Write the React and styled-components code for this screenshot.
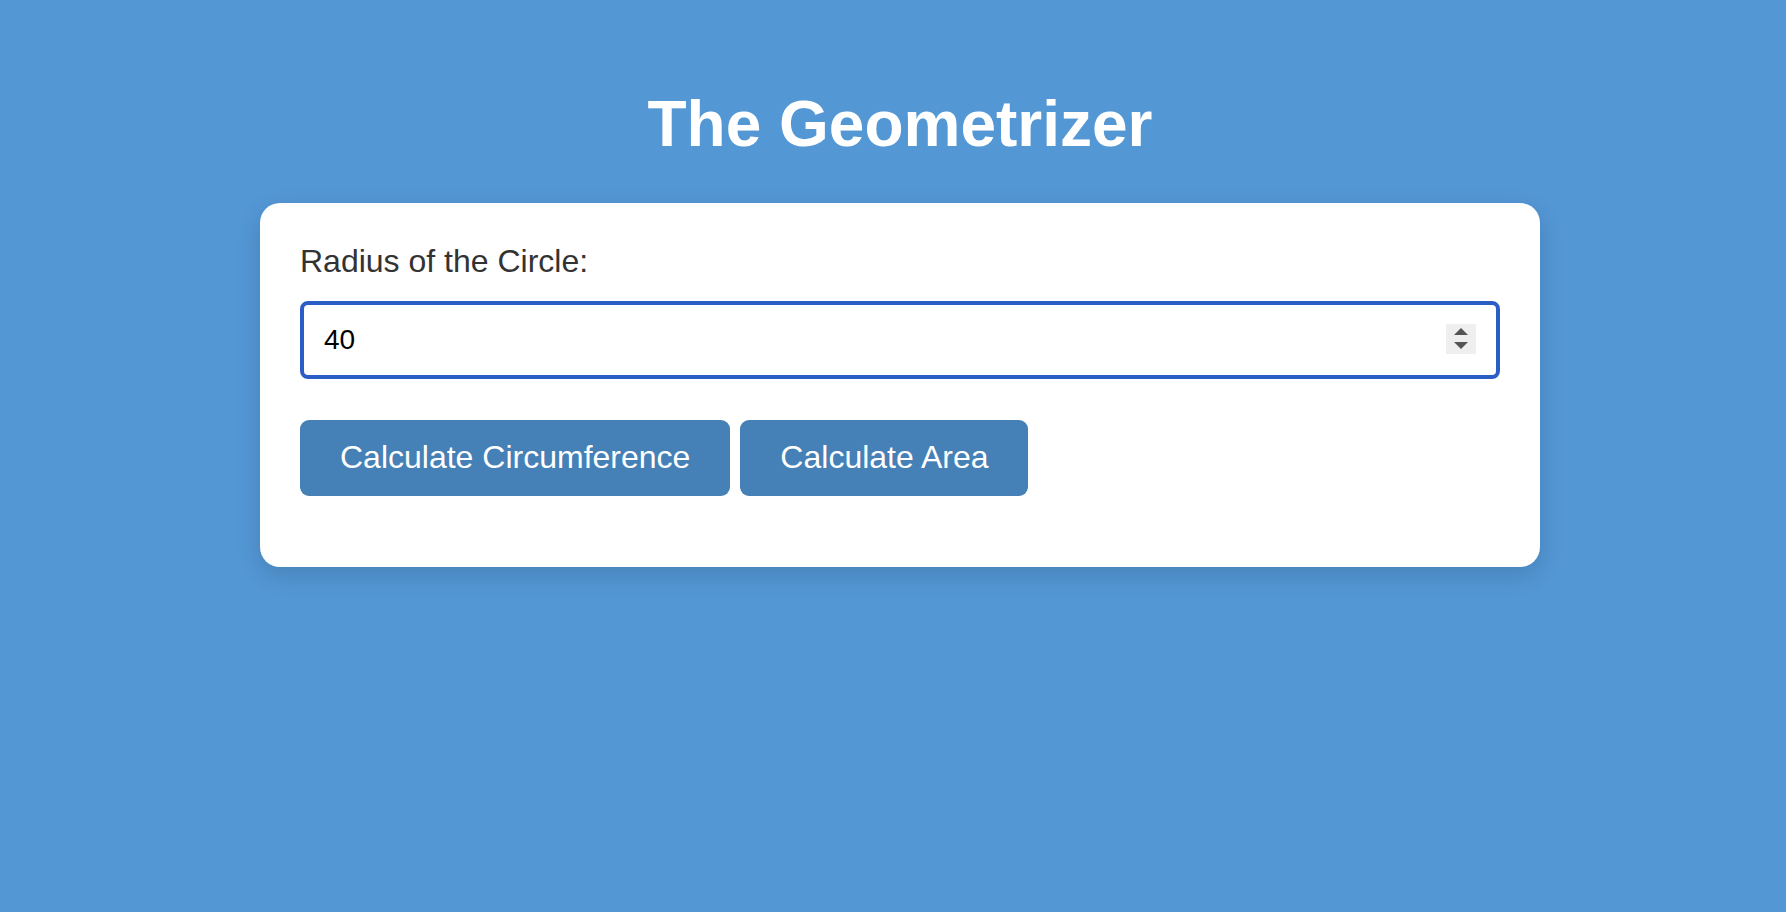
import React, { useState } from "react";
import styled, { createGlobalStyle } from "styled-components";

const GlobalStyle = createGlobalStyle`
  html, body {
    margin: 0;
    padding: 0;
    background: #5397d5;
    font-family: "Liberation Sans", Arial, Helvetica, sans-serif;
  }
  * { box-sizing: border-box; }
`;

const Page = styled.main`
  min-height: 912px;
  padding: 45px 0 0 14px;
  display: flex;
  flex-direction: column;
  align-items: center;
`;

const Title = styled.h1`
  margin: 43px 0 41px;
  font-size: 64px;
  font-weight: 700;
  line-height: 73.6px;
  color: #ffffff;
  text-align: center;
`;

const Card = styled.section`
  width: 1280px;
  background: #ffffff;
  border-radius: 20px;
  padding: 40px 40px 71px;
  box-shadow: 0 8px 24px rgba(0, 0, 0, 0.14);
  display: flex;
  flex-direction: column;
`;

const Label = styled.label`
  font-size: 32px;
  line-height: 37px;
  color: #333333;
  margin-bottom: 21px;
`;

const InputWrap = styled.div`
  position: relative;
  width: 100%;
  margin-bottom: 41px;
`;

const NumberInput = styled.input`
  width: 100%;
  height: 78px;
  padding: 0 20px;
  border: 4px solid #2a5ec6;
  border-radius: 8px;
  outline: none;
  font-family: "Liberation Sans", Arial, Helvetica, sans-serif;
  font-size: 28px;
  color: #000000;
  background: #ffffff;
  -moz-appearance: textfield;
  &::-webkit-outer-spin-button,
  &::-webkit-inner-spin-button {
    -webkit-appearance: none;
    margin: 0;
  }
`;

const Spinner = styled.div`
  position: absolute;
  right: 24px;
  top: 23px;
  width: 30px;
  height: 30px;
  background: #efefef;
  display: flex;
  align-items: center;
  justify-content: center;
`;

const ButtonRow = styled.div`
  display: flex;
  gap: 10px;
`;

const ActionButton = styled.button`
  height: 76px;
  padding: 0 40px;
  border: none;
  border-radius: 9px;
  background: #4580b6;
  color: #ffffff;
  font-family: "Liberation Sans", Arial, Helvetica, sans-serif;
  font-size: 32px;
  cursor: pointer;
`;

export default function App() {
  const [radius, setRadius] = useState("40");
  return (
    <>
      <GlobalStyle />
      <Page>
        <Title>The Geometrizer</Title>
        <Card>
          <Label htmlFor="radius">Radius of the Circle:</Label>
          <InputWrap>
            <NumberInput
              id="radius"
              type="number"
              value={radius}
              onChange={(e) => setRadius(e.target.value)}
            />
            <Spinner>
              <svg width="14" height="22" viewBox="0 0 14 22">
                <polygon points="7,0 14,7 0,7" fill="#555555" />
                <polygon points="0,14 14,14 7,21" fill="#555555" />
              </svg>
            </Spinner>
          </InputWrap>
          <ButtonRow>
            <ActionButton>Calculate Circumference</ActionButton>
            <ActionButton>Calculate Area</ActionButton>
          </ButtonRow>
        </Card>
      </Page>
    </>
  );
}
